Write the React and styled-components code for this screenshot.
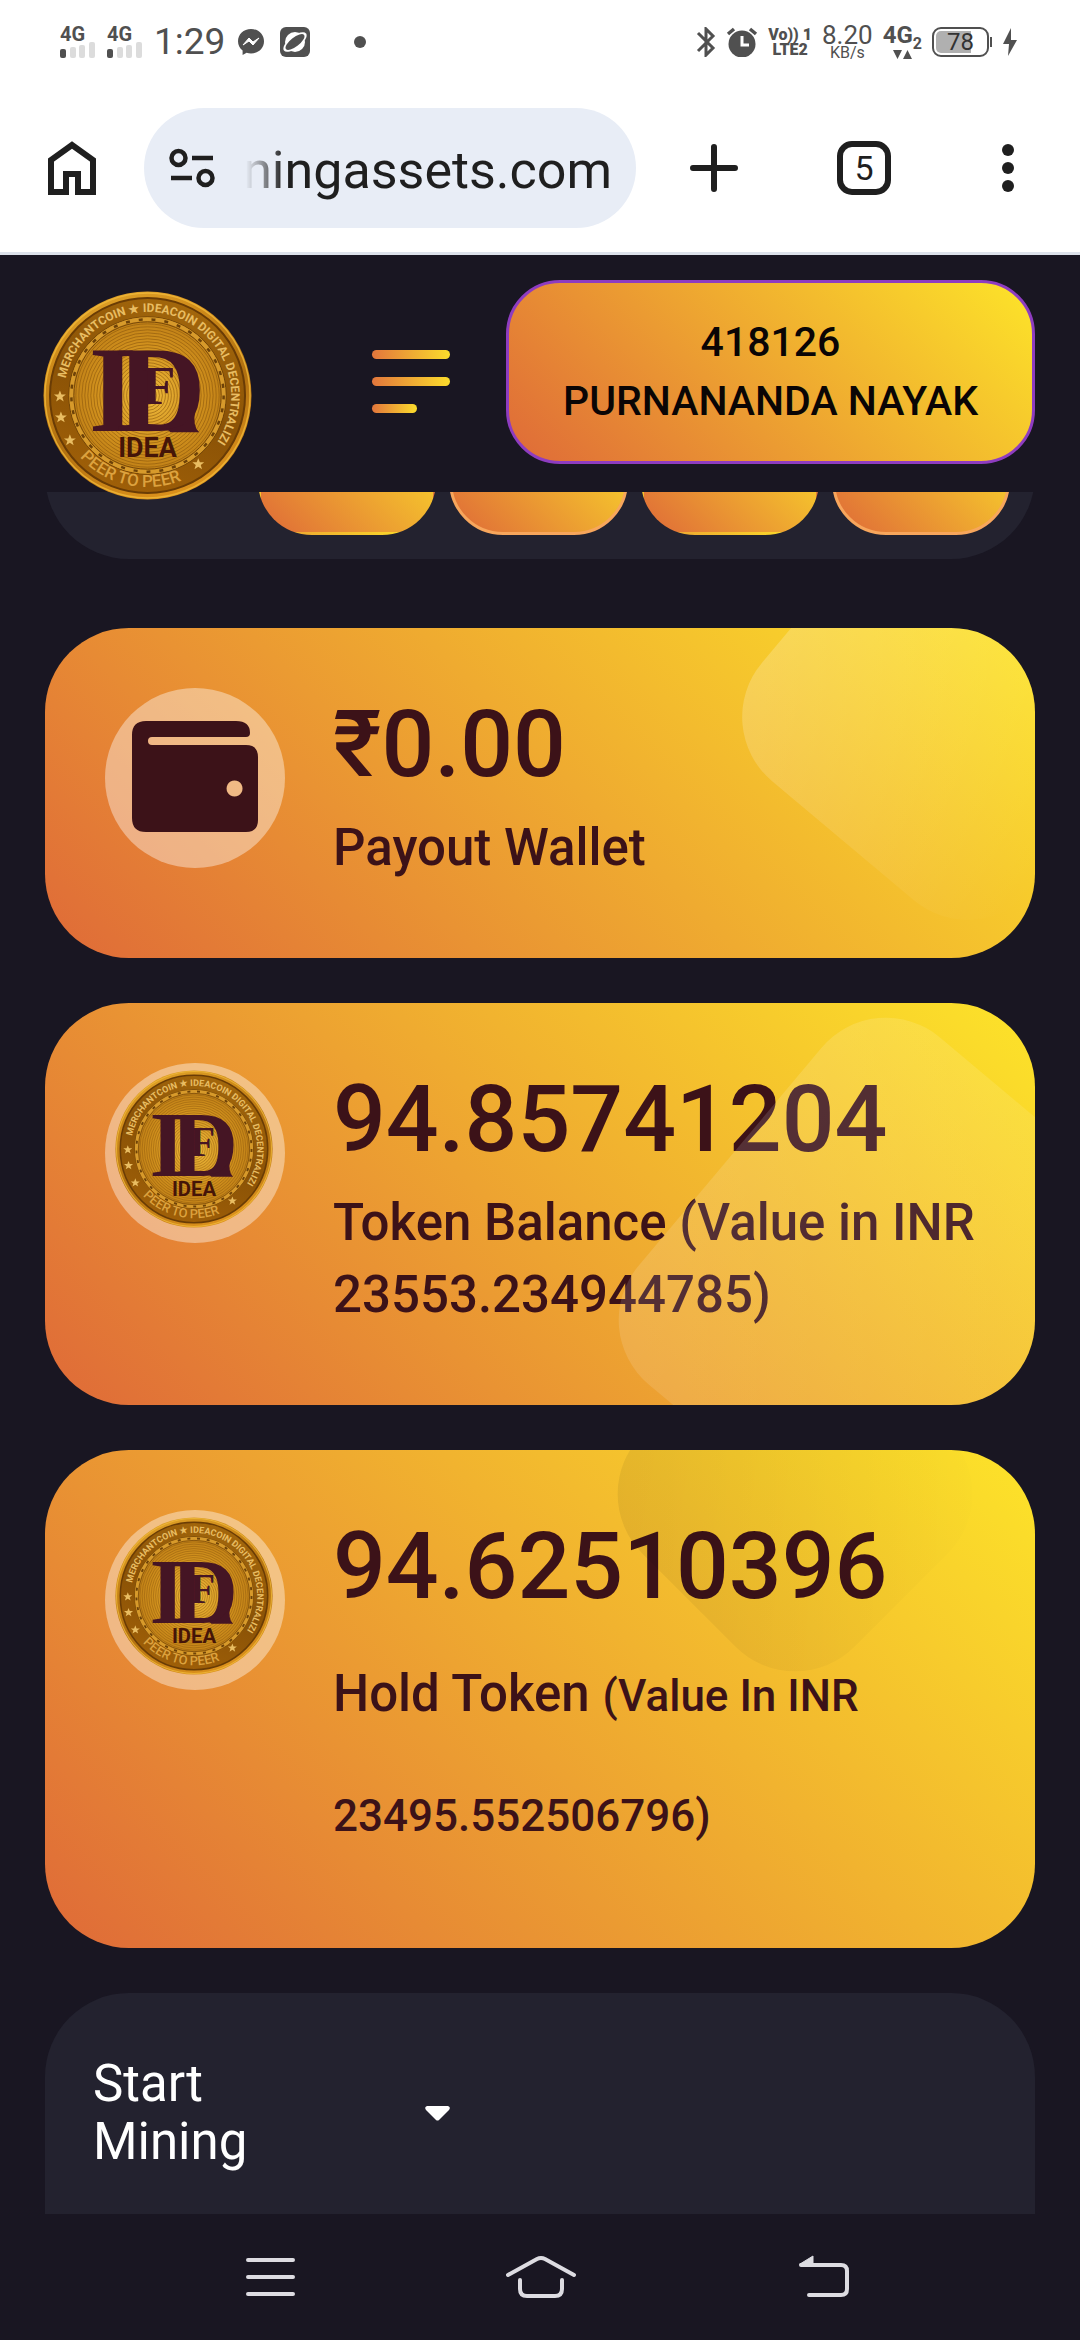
import React from "react";
import styled, { createGlobalStyle } from "styled-components";

const GOLD = "linear-gradient(45deg, #df6a38, #fde429)";
const INK = "#3c1218";
const NIGHT = "#191622";
const PANEL = "#23222f";
const STATUS = "#505050";

const GlobalStyle = createGlobalStyle`
  * { box-sizing: border-box; }
  html, body, #root { margin: 0; }
  body {
    background: ${NIGHT};
    font-family: Roboto, "Liberation Sans", sans-serif;
  }
  button { font: inherit; color: inherit; border: 0; padding: 0; background: none; cursor: pointer; }
  svg { display: block; flex: none; }
`;

const Screen = styled.div`
  display: flex;
  flex-direction: column;
  height: 100vh;
  overflow: hidden;
`;

const StatusBar = styled.header`
  display: flex;
  align-items: center;
  justify-content: space-between;
  flex: none;
  height: 84px;
  padding: 0 62px 0 60px;
  background: #fff;
  color: ${STATUS};
`;

const StatusGroup = styled.div`
  display: flex;
  align-items: center;
  gap: ${(p) => p.$gap}px;
`;

const Signal = styled.div`
  display: flex;
  flex-direction: column;
  width: 35px;
  font-size: 20px;
  font-weight: 700;
  line-height: 15px;
`;

const Clock = styled.time`
  font-size: 37px;
  line-height: 44px;
`;

const Stack = styled.div`
  display: flex;
  flex-direction: column;
  align-items: center;
  font-size: ${(p) => p.$size}px;
  font-weight: ${(p) => p.$weight || 400};
  line-height: ${(p) => p.$line}px;
`;

const SmallLine = styled.span`
  font-size: 16px;
  line-height: 15px;
`;

const Battery = styled.div`
  display: flex;
  align-items: center;
`;

const BatteryShell = styled.div`
  display: flex;
  align-items: center;
  justify-content: center;
  width: 57px;
  height: 30px;
  border: 2px solid ${STATUS};
  border-radius: 9px;
  background: linear-gradient(90deg, #b0b0b0 72%, #fff 72%) content-box;
  padding: 2px;
  font-size: 24px;
  line-height: 22px;
  color: #333;
`;

const BatteryNub = styled.span`
  width: 2px;
  height: 10px;
  margin-left: 1px;
  background: ${STATUS};
`;

const Toolbar = styled.nav`
  display: flex;
  align-items: center;
  flex: none;
  padding: 24px 66px 24px 48px;
  border-bottom: 3px solid #dde2eb;
  background: #fff;
  color: #1f1f1f;
`;

const AddressBar = styled.div`
  display: flex;
  align-items: center;
  flex: 1;
  min-width: 0;
  height: 120px;
  margin: 0 54px 0 48px;
  padding: 0 24px;
  border-radius: 60px;
  background: #e8edf6;
`;

const AddressInput = styled.input`
  flex: 1;
  min-width: 0;
  margin-left: 24px;
  padding: 6px 0 0;
  border: 0;
  outline: 0;
  background: none;
  font: 400 52px/64px Roboto, "Liberation Sans", sans-serif;
  color: #1f1f1f;
  direction: rtl;
  mask-image: linear-gradient(90deg, transparent 6px, #000 44px);
`;

const ToolActions = styled.div`
  display: flex;
  align-items: center;
`;

const TabCount = styled.button`
  width: 54px;
  height: 54px;
  margin: 0 111px 0 99px;
  border: 6px solid #1f1f1f;
  border-radius: 15px;
  font-size: 34px;
  line-height: 42px;
`;

const SiteHeader = styled.header`
  position: relative;
  z-index: 1;
  display: flex;
  align-items: flex-start;
  flex: none;
  padding: 25px 45px 28px 43px;
  background: ${NIGHT};
`;

const LogoLink = styled.a`
  margin: 11px 120px -40px 0;
`;

const MenuButton = styled.button`
  display: flex;
  flex-direction: column;
  gap: 18px;
  width: 78px;
  margin: 70px 56px 0 0;
`;

const MenuLine = styled.span`
  width: ${(p) => (p.$short ? "45px" : "100%")};
  height: 9px;
  border-radius: 5px;
  background: linear-gradient(90deg, #e2763c, #fbdc2c);
`;

const Profile = styled.button`
  flex: 1;
  height: 184px;
  border: 3px solid #8e3cc0;
  border-radius: 54px;
  background: ${GOLD};
  color: #0a0505;
  font-size: 41px;
  font-weight: 500;
  line-height: 59px;
`;

const Content = styled.main`
  display: flex;
  flex-direction: column;
  flex: 1;
  gap: 45px;
  min-height: 0;
  padding: 0 45px;
  overflow: hidden;
`;

/* Scrolled part of the way under the site header. */
const TabStrip = styled.div`
  display: flex;
  align-items: flex-end;
  gap: 13px;
  flex: none;
  height: 187px;
  margin: -120px 0 24px;
  padding: 0 25px 24px 213px;
  border-radius: 84px;
  background: ${PANEL};
`;

const Tab = styled.button`
  flex: 1;
  height: 130px;
  border: 3px solid ${(p) => (p.$outlined ? "#f7a65c" : "transparent")};
  border-radius: 54px;
  background: ${GOLD};
`;

const Card = styled.section`
  position: relative;
  display: flex;
  align-items: flex-start;
  gap: 48px;
  flex: none;
  padding: 60px 60px 74px;
  border-radius: 84px;
  background: ${GOLD};
  color: ${INK};
  overflow: hidden;
`;

/* Translucent decoration lying over the card. */
const Glow = styled.span`
  position: absolute;
  top: ${(p) => p.$top}px;
  right: ${(p) => p.$right}px;
  width: ${(p) => p.$size}px;
  height: ${(p) => p.$size}px;
  border-radius: 84px;
  background: linear-gradient(${(p) => p.$fade});
  transform: rotate(${(p) => p.$turn}deg);
  pointer-events: none;
`;

const Badge = styled.div`
  display: flex;
  align-items: ${(p) => (p.$coin ? "flex-start" : "center")};
  justify-content: center;
  flex: none;
  width: 180px;
  height: 180px;
  padding: ${(p) => (p.$coin ? "7px 3px 0 0" : "0 0 4px")};
  border-radius: 50%;
  background: rgba(255, 255, 255, 0.4);
`;

const Figures = styled.div`
  flex: 1;
  min-width: 0;
`;

const Amount = styled.h2`
  margin: 0 0 10px;
  font-size: 93px;
  font-weight: 500;
  line-height: 114px;
`;

const Label = styled.p`
  margin: 0;
  font-size: 51px;
  font-weight: 500;
  line-height: ${(p) => (p.$airy ? 120 : 72)}px;
`;

const Small = styled.small`
  font-size: 44px;
  line-height: 0;
`;

const MiningPanel = styled.section`
  flex: 1 0 auto;
  padding: 62px 48px;
  border-radius: 84px 84px 0 0;
  background: ${PANEL};
  color: #fff;
`;

const MiningToggle = styled.button`
  display: flex;
  align-items: center;
  justify-content: space-between;
  width: 358px;
  font-size: 51px;
  line-height: 58px;
  text-align: left;
`;

const MiningText = styled.span`
  width: 180px;
`;

const SystemNav = styled.nav`
  display: flex;
  align-items: center;
  justify-content: space-between;
  flex: none;
  height: 126px;
  padding: 0 230px 0 245px;
  background: ${NIGHT};
`;

const HomeKey = styled.button`
  margin-right: 12px;
`;

const star = "M0-6 1.6-1.9 6-1.9 2.5 .8 3.8 5 0 2.5-3.8 5-2.5 .8-6-1.9-1.6-1.9Z";

function Coin({ size, id }) {
  const grooves = [];
  for (let r = 6; r < 74; r += 3) grooves.push(r);
  return (
    <svg width={size} height={size} viewBox="0 0 210 210" role="img" aria-label="Idea coin">
      <defs>
        <linearGradient id={`${id}-rim`} x1="0.2" y1="0" x2="0.6" y2="1">
          <stop offset="0" stopColor="#e2a52a" />
          <stop offset="0.25" stopColor="#cf8b1a" />
          <stop offset="0.6" stopColor="#b06f10" />
          <stop offset="1" stopColor="#dd921c" />
        </linearGradient>
        <linearGradient id={`${id}-band`} x1="0.7" y1="0" x2="0.3" y2="1">
          <stop offset="0" stopColor="#a4680c" />
          <stop offset="0.5" stopColor="#8a5206" />
          <stop offset="1" stopColor="#a06008" />
        </linearGradient>
        <radialGradient id={`${id}-face`} cx="0.5" cy="0.5" r="0.55">
          <stop offset="0" stopColor="#efbb3c" />
          <stop offset="0.6" stopColor="#d0901d" />
          <stop offset="1" stopColor="#ba7a14" />
        </radialGradient>
        <path id={`${id}-top`} d="M105 189A84 84 0 1 1 105.1 189" />
        <path id={`${id}-base`} d="M13 105A92 92 0 0 0 197 105" />
      </defs>
      <circle cx="105" cy="105" r="104.500" fill={`url(#${id}-rim)`} />
      <circle cx="105" cy="105" r="103" fill="none" stroke="#f0b93a" strokeWidth="1.500" strokeOpacity="0.8" />
      <circle cx="105" cy="105" r="98" fill={`url(#${id}-band)`} stroke="#6a3c05" strokeWidth="2" />
      <circle cx="105" cy="105" r="79" fill={`url(#${id}-face)`} stroke="#6f4307" strokeWidth="1" />
      <circle cx="105" cy="105" r="76.500" fill="none" stroke="#d79a2b" strokeWidth="4" />
      <circle cx="105" cy="105" r="76.500" fill="none" stroke="#6e4208" strokeWidth="2.500" strokeDasharray="4 9" />
      <circle cx="105" cy="105" r="74" fill="none" stroke="#754709" strokeWidth="1" />
      {grooves.map((r) => (
        <circle key={r} cx="105" cy="105" r={r} fill="none" stroke="#8a560c" strokeOpacity="0.6" strokeWidth="1" />
      ))}
      <g fill="#e9bd62" fontFamily="Roboto, sans-serif">
        <text fontSize="12" fontWeight="700">
          <textPath href={`#${id}-top`} startOffset="149">MERCHANTCOIN ★ IDEACOIN DIGITAL DECENTRALIZI</textPath>
        </text>
        <text fontSize="17" fontWeight="500" fill="#dda23e">
          <textPath href={`#${id}-base`} startOffset="68">PEER TO PEER</textPath>
        </text>
        <path d={star} transform="translate(156 174)" />
        <path d={star} transform="translate(17 106)" />
        <path d={star} transform="translate(18 127)" />
        <path d={star} transform="translate(27 150)" />
      </g>
      <g fill="#451524" fontFamily="'Liberation Serif', serif" fontWeight="700">
        <text x="46" y="141" fontSize="124">I</text>
        <text x="74" y="141" fontSize="124">D</text>
        <text x="99" y="114" fontSize="56">F</text>
      </g>
      <path d="M124 138Q140 138 145 130L153 120Q150 136 157 142H128Z" fill="#451524" />
      <text x="105" y="167" fontSize="27" fontWeight="700" textAnchor="middle" fill="#451508" fontFamily="Roboto, sans-serif">IDEA</text>
    </svg>
  );
}

function SignalBars() {
  return (
    <svg width="35" height="16" viewBox="0 0 35 16" aria-hidden="true">
      <rect x="0" y="7" width="6" height="9" rx="2" fill={STATUS} />
      <rect x="10" y="5" width="6" height="11" rx="2" fill="#dcdcdc" />
      <rect x="19" y="3" width="6" height="13" rx="2" fill="#dcdcdc" />
      <rect x="29" y="0" width="6" height="16" rx="2" fill="#dcdcdc" />
    </svg>
  );
}

export default function App() {
  return (
    <Screen>
      <GlobalStyle />
      <StatusBar>
        <StatusGroup $gap={12}>
          <Signal>4G<SignalBars /></Signal>
          <Signal>4G<SignalBars /></Signal>
          <Clock>1:29</Clock>
          <svg width="28" height="28" viewBox="0 0 28 28" aria-hidden="true">
            <path d="M14 1C6.500 1 1 6.300 1 13.300c0 4 1.800 7 4.600 9.200V27l4-2.200c1.400.4 2.900.6 4.400.6 7.500 0 13-5.400 13-12.200S21.500 1 14 1Z" fill={STATUS} />
            <path d="m6 17 6-7 4 4 6-4-6 7-4-4Z" fill="#fff" stroke="#fff" />
          </svg>
          <svg width="34" height="30" viewBox="0 0 34 30" aria-hidden="true">
            <rect x="3" width="30" height="30" rx="6" fill={STATUS} />
            <circle cx="18" cy="15" r="10" fill="#fff" />
            <ellipse cx="18" cy="15" rx="14" ry="6" transform="rotate(-38 18 15)" fill="#fff" />
            <ellipse cx="18" cy="15" rx="11.500" ry="4.500" transform="rotate(-38 18 15)" fill={STATUS} />
          </svg>
          <svg width="54" height="12" viewBox="0 0 54 12" aria-hidden="true">
            <circle cx="37" cy="6" r="6" fill={STATUS} />
          </svg>
        </StatusGroup>
        <StatusGroup $gap={10}>
          <svg width="20" height="30" viewBox="0 0 20 30" fill="none" stroke={STATUS} strokeWidth="3" aria-hidden="true">
            <path d="M2 6 17 21 10 28V2L17 9 2 24" />
          </svg>
          <svg width="32" height="30" viewBox="0 0 32 30" aria-hidden="true">
            <circle cx="16" cy="17" r="13.500" fill={STATUS} />
            <path d="M2 7 8 2M30 7 24 2" stroke={STATUS} strokeWidth="3.500" />
            <path d="M16 9v9h7" fill="none" stroke="#fff" strokeWidth="3" />
          </svg>
          <Stack $size={16} $weight={900} $line={15}>
            <span>Vo)) 1</span>
            <span>LTE2</span>
          </Stack>
          <Stack $size={26} $line={20}>
            <span>8.20</span>
            <SmallLine>KB/s</SmallLine>
          </Stack>
          <Stack $size={24} $weight={700} $line={20}>
            <span>4G<SmallLine as="sub">2</SmallLine></span>
            <svg width="19" height="9" viewBox="0 0 19 9" fill={STATUS} aria-hidden="true">
              <path d="M0 0H9L4.500 9ZM10 9H19L14.500 0Z" />
            </svg>
          </Stack>
          <Battery>
            <BatteryShell>78</BatteryShell>
            <BatteryNub />
          </Battery>
          <svg width="16" height="28" viewBox="0 0 16 28" fill={STATUS} aria-hidden="true">
            <path d="M9 0 1 16H7L6 28 15 12H9Z" />
          </svg>
        </StatusGroup>
      </StatusBar>

      <Toolbar aria-label="Browser">
        <button aria-label="Home">
          <svg width="48" height="54" viewBox="0 0 48 54" fill="none" stroke="#1f1f1f" strokeWidth="6">
            <path d="M3 51V19L24 4 45 19V51H30V33H18V51Z" />
          </svg>
        </button>
        <AddressBar>
          <svg width="48" height="42" viewBox="0 0 48 42" fill="none" stroke="#1f1f1f" strokeWidth="4.500" aria-hidden="true">
            <circle cx="10.500" cy="11" r="7" />
            <circle cx="37.500" cy="31" r="7" />
            <path d="M24 11H45M3 31H24" />
          </svg>
          <AddressInput aria-label="Address" defaultValue="ningassets.com" />
        </AddressBar>
        <ToolActions>
          <button aria-label="New tab">
            <svg width="48" height="48" viewBox="0 0 48 48" fill="none" stroke="#1f1f1f" strokeWidth="6" strokeLinecap="round">
              <path d="M24 3V45M3 24H45" />
            </svg>
          </button>
          <TabCount aria-label="Open tabs">5</TabCount>
          <button aria-label="More">
            <svg width="12" height="48" viewBox="0 0 12 48" fill="#1f1f1f">
              <circle cx="6" cy="6" r="6" />
              <circle cx="6" cy="24" r="6" />
              <circle cx="6" cy="42" r="6" />
            </svg>
          </button>
        </ToolActions>
      </Toolbar>

      <SiteHeader>
        <LogoLink href="#" aria-label="Idea">
          <Coin size={209} id="logo" />
        </LogoLink>
        <MenuButton aria-label="Menu">
          <MenuLine />
          <MenuLine />
          <MenuLine $short />
        </MenuButton>
        <Profile>
          418126
          <br />
          PURNANANDA NAYAK
        </Profile>
      </SiteHeader>

      <Content>
        <TabStrip>
          <Tab aria-label="First" />
          <Tab aria-label="Second" $outlined />
          <Tab aria-label="Third" />
          <Tab aria-label="Fourth" $outlined />
        </TabStrip>

        <Card>
          <Badge>
            <svg width="126" height="111" viewBox="0 0 126 111" fill={INK} fillRule="evenodd" aria-hidden="true">
              <path d="M14 0H104Q118 0 118 12 118 16 114 16H20Q16 16 16 20 16 24 20 24H114Q126 24 126 36V99Q126 111 114 111H14Q0 111 0 97V14Q0 0 14 0ZM102.500 59.500a8 8 0 1 0 .1 0Z" />
            </svg>
          </Badge>
          <Figures>
            <Amount>₹0.00</Amount>
            <Label>Payout Wallet</Label>
          </Figures>
          <Glow $top={-99} $right={-98} $size={353} $turn={40} $fade="90deg, rgba(255,255,255,0.2), rgba(255,255,255,0)" />
        </Card>

        <Card>
          <Badge $coin>
            <Coin size={158} id="token" />
          </Badge>
          <Figures>
            <Amount>94.85741204</Amount>
            <Label>Token Balance (Value in INR 23553.234944785)</Label>
          </Figures>
          <Glow $top={73} $right={-95} $size={453} $turn={40} $fade="90deg, rgba(255,255,255,0.13), rgba(255,255,255,0.05)" />
        </Card>

        <Card>
          <Badge $coin>
            <Coin size={158} id="hold" />
          </Badge>
          <Figures>
            <Amount>94.62510396</Amount>
            <Label $airy>
              Hold Token <Small>(Value In INR 23495.552506796)</Small>
            </Label>
          </Figures>
          <Glow $top={-106} $right={90} $size={300} $turn={45} $fade="45deg, rgba(0,0,0,0.07), rgba(0,0,0,0)" />
        </Card>

        <MiningPanel>
          <MiningToggle aria-haspopup="true">
            <MiningText>Start Mining</MiningText>
            <svg width="27" height="15" viewBox="0 0 27 15" fill="#fff" aria-hidden="true">
              <path d="M3 0H24Q27 1 25 4L15 14Q13.500 15 12 14L2 4Q0 1 3 0Z" />
            </svg>
          </MiningToggle>
        </MiningPanel>
      </Content>

      <SystemNav aria-label="System">
        <button aria-label="Recent apps">
          <svg width="51" height="40" viewBox="0 0 51 40" stroke="#dddce2" strokeWidth="4" strokeLinecap="round">
            <path d="M3 3H48M3 20H48M3 37H48" />
          </svg>
        </button>
        <HomeKey aria-label="Home screen">
          <svg width="72" height="44" viewBox="0 0 72 44" fill="none" stroke="#dddce2" strokeWidth="4" strokeLinecap="round">
            <path d="M3 20 32 4Q36 2 40 4L69 20" />
            <path d="M15 25V34Q15 41 22 41H50Q57 41 57 34V25" />
          </svg>
        </HomeKey>
        <button aria-label="Back">
          <svg width="52" height="44" viewBox="0 0 52 44" fill="none" stroke="#dddce2" strokeWidth="4" strokeLinecap="round">
            <path d="M3 10H43Q49 10 49 16V34Q49 40 43 40H11" />
            <path d="M2 9 15 1V9Z" fill="#dddce2" strokeWidth="1" />
          </svg>
        </button>
      </SystemNav>
    </Screen>
  );
}
